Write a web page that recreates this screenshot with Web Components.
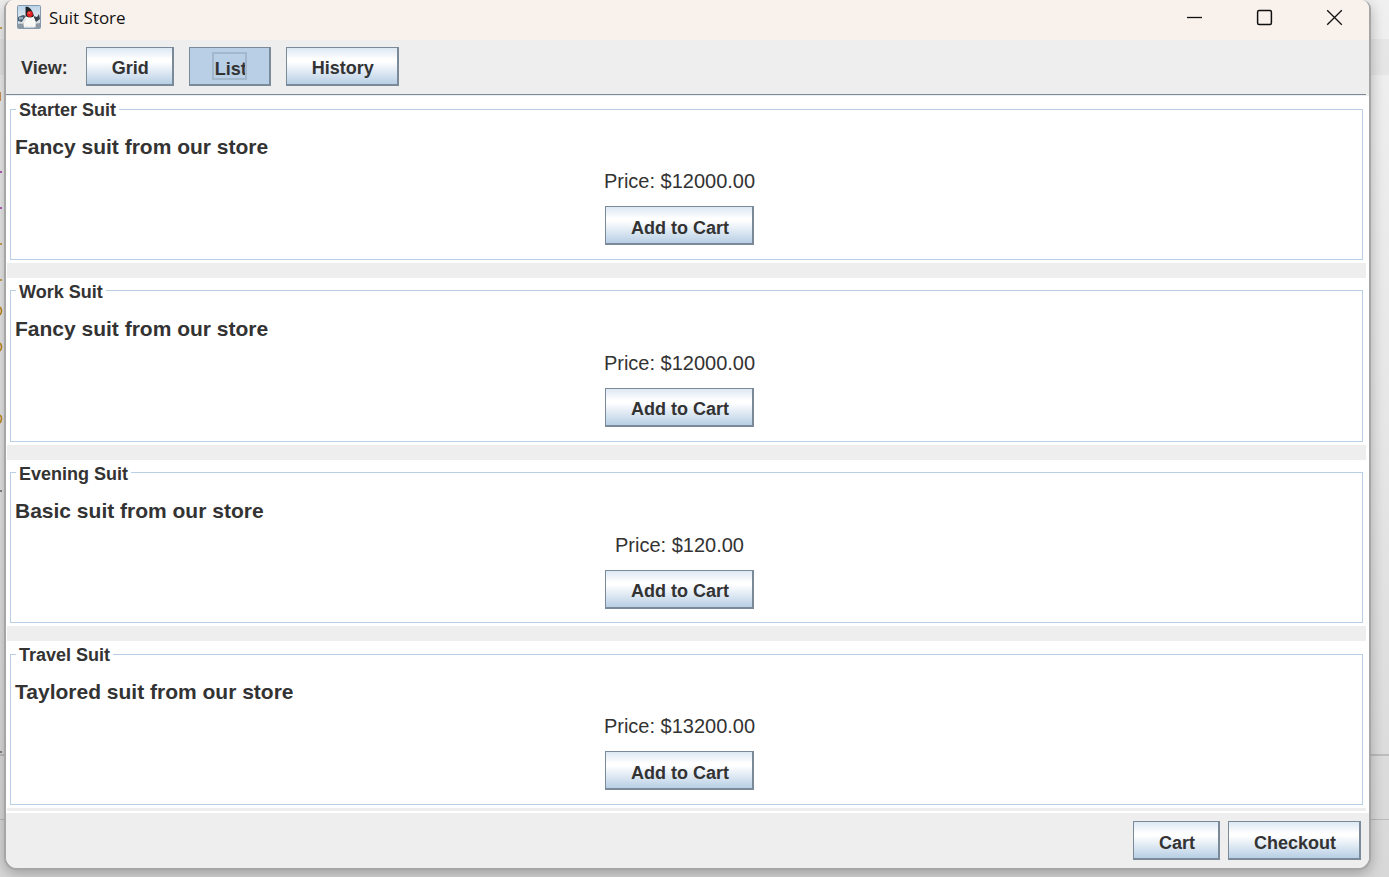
<!DOCTYPE html>
<html lang="en">
<head>
<meta charset="utf-8">
<title>Suit Store</title>
<style>
  html, body { margin: 0; height: 100%; }
  body { font-family: "Liberation Sans", Arial, sans-serif; font-size: 18px; color: #333; }
</style>
</head>
<body>
<store-desktop>
  <store-window>
    <title-bar slot="title">Suit Store</title-bar>
    <view-bar slot="toolbar"></view-bar>
    <suit-row name="Starter Suit" price="$12000.00">Fancy suit from our store</suit-row>
    <suit-row name="Work Suit" price="$12000.00">Fancy suit from our store</suit-row>
    <suit-row name="Evening Suit" price="$120.00">Basic suit from our store</suit-row>
    <suit-row name="Travel Suit" price="$13200.00">Taylored suit from our store</suit-row>
    <cart-bar slot="footer"></cart-bar>
  </store-window>
</store-desktop>

<script>
function define(name, html, setup) {
  const template = document.createElement('template');
  template.innerHTML = html;
  customElements.define(name, class extends HTMLElement {
    constructor() {
      super();
      this.attachShadow({ mode: 'open' }).append(template.content.cloneNode(true));
    }
    connectedCallback() { if (setup) setup(this, this.shadowRoot); }
  });
}

/* Push button with the Metal look: blue-white gradient and a steel edge */
define('metal-button', `
  <style>
    :host { display: inline-block; }
    button {
      display: block; box-sizing: border-box; height: 39px; margin: 0; padding: 5px 23px 0 25px;
      border: solid #7a8a99; border-width: 1px 2px 2px 1px; border-radius: 0;
      background: linear-gradient(#dde8f3 0%, #fff 32%, #fff 38%, #b8cfe5 100%);
      color: #333; font: bold 18px/22px "Liberation Sans", Arial, sans-serif; white-space: nowrap;
    }
    :host([selected]) button { background: #b8cfe5; padding: 0 22px; }
    :host([selected]) span {
      display: block; box-sizing: border-box; width: 35px; height: 28px; padding: 4px 0 0 1px;
      border: 2px solid #a3b8cc; overflow: hidden; line-height: 22px;
    }
  </style>
  <button type="button"><span><slot></slot></span></button>`,
  (host, root) => {
    if (host.hasAttribute('selected')) root.querySelector('button').setAttribute('aria-pressed', 'true');
  });

define('title-bar', `
  <style>
    :host { display: flex; align-items: center; height: 40px; padding: 0 19px 0 11px; background: #f9f1ec; box-sizing: border-box; color: #111; }
    .icon { width: 24px; height: 24px; margin: 0 8px 6px 0; }
    h1 { flex: 1; margin: 0 0 4px; font: 17px/24px "Open Sans", "Noto Sans", sans-serif; }
    nav { display: flex; gap: 38px; margin-bottom: 5px; }
    button { width: 32px; height: 32px; padding: 0; border: 0; background: none; display: grid; place-items: center; }
    nav svg { width: 17px; height: 17px; fill: none; stroke: #111; stroke-width: 1.3; display: block; }
  </style>
  <svg class="icon" viewBox="0 0 24 24" aria-hidden="true">
    <defs><linearGradient id="sky" x2="0" y2="1"><stop stop-color="#b9d3ea"/><stop offset=".55" stop-color="#e3e9ee"/><stop offset="1" stop-color="#c3cdd5"/></linearGradient></defs>
    <rect x=".5" y=".5" width="23" height="23" rx="1" fill="url(#sky)" stroke="#8299ad"/>
    <path d="M1 12l5-2 3 1v4l-4 2-4-1z" fill="#4a5b69"/>
    <path d="M2 12l4 0 0 2-4 1z" fill="#8fa9bf"/>
    <path d="M16 11l4 1 2-3 1 5-4 3z" fill="#39444e"/>
    <path d="M1 19l6-1 0 5H1zM17 19l6-1v5h-6z" fill="#8d99a2"/>
    <path d="M9.500 11c-3 3-3.500 7-2.500 11l3-.5 2.500.5 2.500-.5 3.500 1c.5-4 0-8-2.500-11.500z" fill="#f7f7f4"/>
    <path d="M9 11l-3 4-2 4 3-1 2-3z" fill="#dfe3e6"/>
    <path d="M8.500 2c2.500-.8 5 1 6.500 4 1 2 2 4 2 6-2 1-6 1-8 0-.8-3-.2-6-.5-10z" fill="#1f2327"/>
    <path d="M9 11c2 2 6 2 8 0v2c-3 1-6 1-8 0z" fill="#f7f7f4"/>
    <circle cx="12.800" cy="9" r="3" fill="#e02020"/><circle cx="12.200" cy="8" r="1.100" fill="#ff6a5d"/>
  </svg>
  <h1><slot></slot></h1>
  <nav aria-label="Window controls">
    <button type="button" aria-label="Minimize"><svg viewBox="0 0 17 17"><path d="M1 8.5h15"/></svg></button>
    <button type="button" aria-label="Maximize"><svg viewBox="0 0 17 17"><rect x="1.6" y="1.6" width="13.8" height="13.8" rx="1.5" stroke-width="1.5"/></svg></button>
    <button type="button" aria-label="Close"><svg viewBox="0 0 17 17"><path d="M1.2 1.2l14.6 14.6M15.8 1.2L1.2 15.8"/></svg></button>
  </nav>`);

define('view-bar', `
  <style>
    :host { display: block; background: #eee; padding-bottom: 1px; }
    div { display: flex; align-items: center; gap: 15px; box-sizing: border-box; height: 55px; padding: 0 0 2px 15px; margin-right: 3px; border-bottom: 1px solid #7a8a99; }
    b { padding: 4px 3px 0 0; line-height: 22px; }
  </style>
  <div role="toolbar" aria-label="View"><b>View:</b>
    <metal-button>Grid</metal-button><metal-button selected>List</metal-button><metal-button>History</metal-button></div>`);

define('suit-row', `
  <style>
    :host { display: grid; background: #fff; padding: 1px 3px 3px; min-height: 0; }
    fieldset { margin: 0; padding: 14px 4px 13px; border: 1px solid #b8cfe5; min-width: 0; }
    legend { margin-left: 1px; padding: 2px 3px 0; font-weight: bold; line-height: 22px; }
    h2 { margin: 0 0 11px; font-size: 21px; line-height: 24px; }
    .buy { display: flex; flex-direction: column; align-items: center; gap: 13px; padding-right: 14px; }
    p { margin: 0; font-size: 20px; line-height: 23px; }
  </style>
  <fieldset>
    <legend></legend>
    <h2><slot></slot></h2>
    <div class="buy"><p></p><metal-button>Add to Cart</metal-button></div>
  </fieldset>`,
  (host, root) => {
    root.querySelector('legend').textContent = host.getAttribute('name');
    root.querySelector('p').textContent = 'Price: ' + host.getAttribute('price');
  });

define('cart-bar', `
  <style>
    :host { display: flex; justify-content: flex-end; align-items: flex-start; gap: 8px; height: 55px; padding: 8px 8px 0; box-sizing: border-box; background: #eee; }
  </style>
  <metal-button>Cart</metal-button><metal-button>Checkout</metal-button>`);

define('store-window', `
  <style>
    :host {
      display: flex; flex-direction: column; box-sizing: border-box; min-height: 100%; overflow: hidden;
      border: 2px solid #a6a6a6; border-top: 0; border-radius: 9px 9px 13px 13px; background: #eee;
      box-shadow: 0 4px 14px #0004;
    }
    main { flex: 1; display: grid; padding: 0 3px 2px 1px; background: #fff; }
    .list { display: grid; grid-auto-rows: 1fr; gap: 15px; padding-bottom: 3px; background: #eee; }
  </style>
  <slot name="title"></slot>
  <slot name="toolbar"></slot>
  <main><div class="list"><slot></slot></div></main>
  <slot name="footer"></slot>`);

/* Desktop behind the window: an editor whose clipped text shows at the left edge */
define('store-desktop', `
  <style>
    :host {
      display: grid; position: relative; box-sizing: border-box; min-height: 100vh; padding: 0 18px 7px 4px;
      background: linear-gradient(#0000 39px, #0000000a 39px, #0000000a 75px, #0000 75px, #0000 754px, #00000024 754px, #00000024 756px, #0000 756px, #0000 819px, #00000024 819px, #00000024 820px, #0000 820px),
        linear-gradient(#f0f0f0, #e6e6e6 50%, #d8d8d8);
    }
    svg { position: absolute; left: 0; top: 0; width: 6px; height: 800px; fill: none; stroke-width: 1.6; }
    ::slotted(*) { position: relative; }
  </style>
  <svg aria-hidden="true">
    <g stroke="#c08a20"><path d="M0 28h2M0 244h2M0 280h2M0 307q3 4 0 8M0 343q3 4 0 8M0 415q3 3 0 8"/><path d="M5 20v8M5 236v8M5 271v8M5 307v8M5 343v8M5 415v8"/></g>
    <path d="M0 92v9" stroke="#c87a30"/>
    <path d="M0 172h2M0 208h2M5 164v8M5 200v8" stroke="#a030a8"/>
    <path d="M0 491h2M0 752h2" stroke="#666"/>
  </svg>
  <slot></slot>`);
</script>
</body>
</html>
